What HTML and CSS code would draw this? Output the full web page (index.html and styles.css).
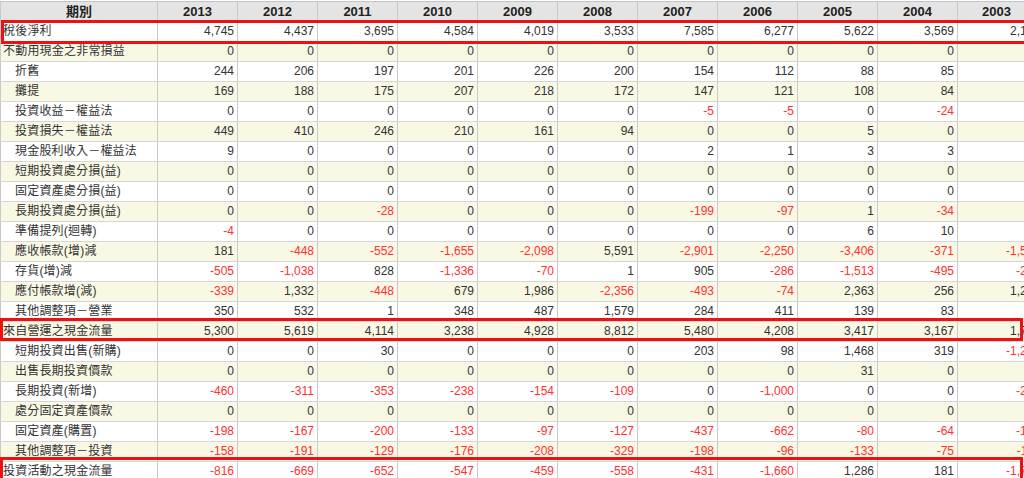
FILE: index.html
```html
<!DOCTYPE html>
<html lang="zh-Hant">
<head>
<meta charset="utf-8">
<title>現金流量表</title>
<link rel="stylesheet" href="styles.css">
</head>
<body>
<div class="sheet">
<table class="grid">
<colgroup><col class="c-label"><col class="c-year"><col class="c-year"><col class="c-year"><col class="c-year"><col class="c-year"><col class="c-year"><col class="c-year"><col class="c-year"><col class="c-year"><col class="c-year"><col class="c-last"></colgroup>
<thead>
<tr><th>期別</th><th>2013</th><th>2012</th><th>2011</th><th>2010</th><th>2009</th><th>2008</th><th>2007</th><th>2006</th><th>2005</th><th>2004</th><th>2003</th></tr>
</thead>
<tbody>
<tr><td class="lbl">稅後淨利</td><td>4,745</td><td>4,437</td><td>3,695</td><td>4,584</td><td>4,019</td><td>3,533</td><td>7,585</td><td>6,277</td><td>5,622</td><td>3,569</td><td>2,150</td></tr>
<tr class="alt"><td class="lbl">不動用現金之非常損益</td><td>0</td><td>0</td><td>0</td><td>0</td><td>0</td><td>0</td><td>0</td><td>0</td><td>0</td><td>0</td><td>0</td></tr>
<tr><td class="lbl sub">折舊</td><td>244</td><td>206</td><td>197</td><td>201</td><td>226</td><td>200</td><td>154</td><td>112</td><td>88</td><td>85</td><td>80</td></tr>
<tr class="alt"><td class="lbl sub">攤提</td><td>169</td><td>188</td><td>175</td><td>207</td><td>218</td><td>172</td><td>147</td><td>121</td><td>108</td><td>84</td><td>60</td></tr>
<tr><td class="lbl sub">投資收益－權益法</td><td>0</td><td>0</td><td>0</td><td>0</td><td>0</td><td>0</td><td class="neg">-5</td><td class="neg">-5</td><td>0</td><td class="neg">-24</td><td>0</td></tr>
<tr class="alt"><td class="lbl sub">投資損失－權益法</td><td>449</td><td>410</td><td>246</td><td>210</td><td>161</td><td>94</td><td>0</td><td>0</td><td>5</td><td>0</td><td>0</td></tr>
<tr><td class="lbl sub">現金股利收入－權益法</td><td>9</td><td>0</td><td>0</td><td>0</td><td>0</td><td>0</td><td>2</td><td>1</td><td>3</td><td>3</td><td>0</td></tr>
<tr class="alt"><td class="lbl sub">短期投資處分損(益)</td><td>0</td><td>0</td><td>0</td><td>0</td><td>0</td><td>0</td><td>0</td><td>0</td><td>0</td><td>0</td><td>0</td></tr>
<tr><td class="lbl sub">固定資產處分損(益)</td><td>0</td><td>0</td><td>0</td><td>0</td><td>0</td><td>0</td><td>0</td><td>0</td><td>0</td><td>0</td><td>0</td></tr>
<tr class="alt"><td class="lbl sub">長期投資處分損(益)</td><td>0</td><td>0</td><td class="neg">-28</td><td>0</td><td>0</td><td>0</td><td class="neg">-199</td><td class="neg">-97</td><td>1</td><td class="neg">-34</td><td>0</td></tr>
<tr><td class="lbl sub">準備提列(迴轉)</td><td class="neg">-4</td><td>0</td><td>0</td><td>0</td><td>0</td><td>0</td><td>0</td><td>0</td><td>6</td><td>10</td><td>0</td></tr>
<tr class="alt"><td class="lbl sub">應收帳款(增)減</td><td>181</td><td class="neg">-448</td><td class="neg">-552</td><td class="neg">-1,655</td><td class="neg">-2,098</td><td>5,591</td><td class="neg">-2,901</td><td class="neg">-2,250</td><td class="neg">-3,406</td><td class="neg">-371</td><td class="neg">-1,536</td></tr>
<tr><td class="lbl sub">存貨(增)減</td><td class="neg">-505</td><td class="neg">-1,038</td><td>828</td><td class="neg">-1,336</td><td class="neg">-70</td><td>1</td><td>905</td><td class="neg">-286</td><td class="neg">-1,513</td><td class="neg">-495</td><td class="neg">-244</td></tr>
<tr class="alt"><td class="lbl sub">應付帳款增(減)</td><td class="neg">-339</td><td>1,332</td><td class="neg">-448</td><td>679</td><td>1,986</td><td class="neg">-2,356</td><td class="neg">-493</td><td class="neg">-74</td><td>2,363</td><td>256</td><td>1,215</td></tr>
<tr><td class="lbl sub">其他調整項－營業</td><td>350</td><td>532</td><td>1</td><td>348</td><td>487</td><td>1,579</td><td>284</td><td>411</td><td>139</td><td>83</td><td>0</td></tr>
<tr class="alt"><td class="lbl">來自營運之現金流量</td><td>5,300</td><td>5,619</td><td>4,114</td><td>3,238</td><td>4,928</td><td>8,812</td><td>5,480</td><td>4,208</td><td>3,417</td><td>3,167</td><td>1,742</td></tr>
<tr><td class="lbl sub">短期投資出售(新購)</td><td>0</td><td>0</td><td>30</td><td>0</td><td>0</td><td>0</td><td>203</td><td>98</td><td>1,468</td><td>319</td><td class="neg">-1,250</td></tr>
<tr class="alt"><td class="lbl sub">出售長期投資價款</td><td>0</td><td>0</td><td>0</td><td>0</td><td>0</td><td>0</td><td>0</td><td>0</td><td>31</td><td>0</td><td>0</td></tr>
<tr><td class="lbl sub">長期投資(新增)</td><td class="neg">-460</td><td class="neg">-311</td><td class="neg">-353</td><td class="neg">-238</td><td class="neg">-154</td><td class="neg">-109</td><td>0</td><td class="neg">-1,000</td><td>0</td><td>0</td><td class="neg">-230</td></tr>
<tr class="alt"><td class="lbl sub">處分固定資產價款</td><td>0</td><td>0</td><td>0</td><td>0</td><td>0</td><td>0</td><td>0</td><td>0</td><td>0</td><td>0</td><td>0</td></tr>
<tr><td class="lbl sub">固定資產(購置)</td><td class="neg">-198</td><td class="neg">-167</td><td class="neg">-200</td><td class="neg">-133</td><td class="neg">-97</td><td class="neg">-127</td><td class="neg">-437</td><td class="neg">-662</td><td class="neg">-80</td><td class="neg">-64</td><td class="neg">-142</td></tr>
<tr class="alt"><td class="lbl sub">其他調整項－投資</td><td class="neg">-158</td><td class="neg">-191</td><td class="neg">-129</td><td class="neg">-176</td><td class="neg">-208</td><td class="neg">-329</td><td class="neg">-198</td><td class="neg">-96</td><td class="neg">-133</td><td class="neg">-75</td><td class="neg">-118</td></tr>
<tr><td class="lbl">投資活動之現金流量</td><td class="neg">-816</td><td class="neg">-669</td><td class="neg">-652</td><td class="neg">-547</td><td class="neg">-459</td><td class="neg">-558</td><td class="neg">-431</td><td class="neg">-1,660</td><td>1,286</td><td>181</td><td class="neg">-1,740</td></tr>
</tbody>
</table>
<div class="mark mark-net"></div>
<div class="mark mark-op"></div>
<div class="mark mark-inv"></div>
</div>
</body>
</html>
```
FILE: styles.css
```css
html, body {
  margin: 0;
  padding: 0;
  background: #ffffff;
  overflow: hidden;
}

body {
  font-family: "Liberation Sans", "Noto Sans CJK TC", sans-serif;
  color: #333333;
}

.sheet {
  position: relative;
  width: 1024px;
  height: 478px;
  overflow: hidden;
}

.grid {
  border-collapse: collapse;
  table-layout: fixed;
  width: 1043px;
  margin-top: 1px;
}

.c-label { width: 157px; }
.c-year { width: 80px; }
.c-last { width: 86px; }

.grid th,
.grid td {
  height: 19px;
  padding: 0 3px 0 0;
  border: 1px solid #cacaca;
  border-top-color: #d6d6d6;
  border-bottom-color: #d6d6d6;
  font-size: 12px;
  line-height: 19px;
  white-space: nowrap;
  overflow: hidden;
  text-align: right;
  vertical-align: middle;
}

.grid th {
  background: #e4e4e4;
  color: #222222;
  font-weight: bold;
  font-size: 13px;
  text-align: center;
  padding: 0;
  border-top-color: #c4c4c4;
}

.grid th:last-child {
  text-align: left;
  padding-left: 24px;
}

.grid tbody tr { background: #ffffff; }
.grid tbody tr.alt { background: #f9f8e4; }

.grid td.lbl {
  text-align: left;
  padding-left: 2px;
  font-size: 12px;
  letter-spacing: 0.2px;
}

.grid td.sub { padding-left: 14px; }

.grid td.neg { color: #ff3030; }

.mark {
  position: absolute;
  border: 3px solid #ee1111;
  box-sizing: border-box;
}

.mark-net {
  left: 1px;
  top: 20px;
  width: 1040px;
  height: 24px;
}

.mark-op {
  left: 0;
  top: 318px;
  width: 1023px;
  height: 23px;
}

.mark-inv {
  left: 0;
  top: 457px;
  width: 1023px;
  height: 40px;
}
```
